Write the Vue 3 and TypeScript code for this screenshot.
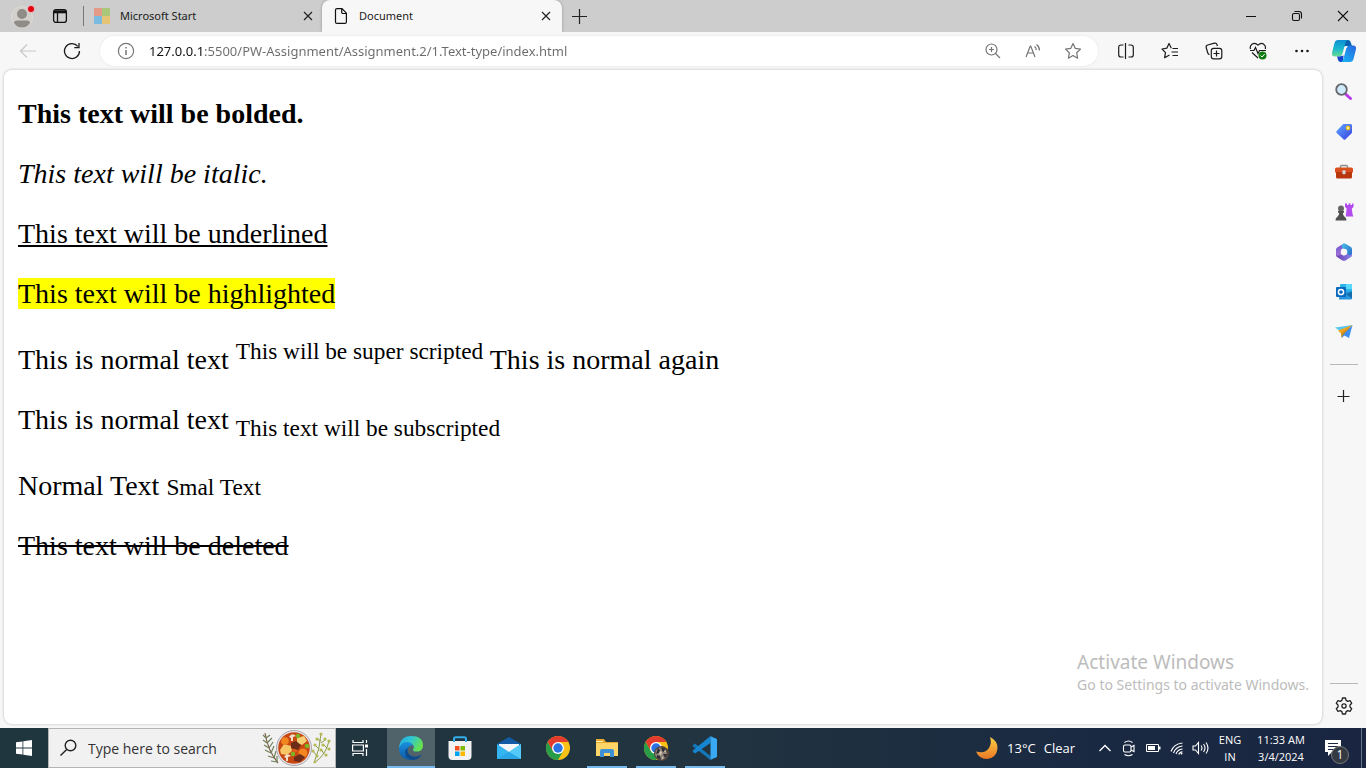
<script setup lang="ts">
import { ref } from 'vue'

interface SideApp {
  id: string
  label: string
}

interface TaskApp {
  id: string
  label: string
  state: 'active' | 'running' | 'idle'
}

const address = ref<string>('127.0.0.1:5500/PW-Assignment/Assignment.2/1.Text-type/index.html')
const query = ref<string>('')

const sideApps: SideApp[] = [
  { id: 'search', label: 'Search' },
  { id: 'shopping', label: 'Shopping' },
  { id: 'tools', label: 'Tools' },
  { id: 'games', label: 'Games' },
  { id: 'm365', label: 'Microsoft 365' },
  { id: 'outlook', label: 'Outlook' },
  { id: 'drop', label: 'Drop' },
]

const taskApps: TaskApp[] = [
  { id: 'edge', label: 'Microsoft Edge', state: 'active' },
  { id: 'store', label: 'Microsoft Store', state: 'idle' },
  { id: 'mail', label: 'Mail', state: 'idle' },
  { id: 'chrome', label: 'Google Chrome', state: 'idle' },
  { id: 'files', label: 'File Explorer', state: 'running' },
  { id: 'profile', label: 'Google Chrome profile', state: 'running' },
  { id: 'code', label: 'Visual Studio Code', state: 'running' },
]
</script>

<template>
  <div class="desktop">
    <header class="tabstrip">
      <button class="profile" aria-label="Profile">
        <svg width="24" height="26" viewBox="0 0 24 26">
          <circle cx="11" cy="14" r="10.5" fill="#d2d0cd" stroke="#dedbd5" />
          <circle cx="11" cy="11" r="5" fill="#8f8b86" />
          <path d="M3 20q0-2.500 3-2.500h10q3 0 3 2.500q-3 4.500-8 4.500t-8-4.500z" fill="#8f8b86" />
          <circle cx="20" cy="6" r="3.500" fill="#e3000f" stroke="#eee" stroke-width=".6" />
        </svg>
      </button>
      <button class="workspaces" aria-label="Tab actions">
        <svg width="16" height="16" viewBox="0 0 16 16" fill="none" stroke="#111" stroke-width="1.300">
          <rect x="1.600" y="1.600" width="12.800" height="12.800" rx="2.500" />
          <path d="M2 3.800h12" stroke-width="3" />
          <path d="M5.500 5v9" />
        </svg>
      </button>
      <div class="tab">
        <svg class="favicon" width="16" height="16" viewBox="0 0 16 16">
          <path fill="#e49a88" d="M0 0h8v8H0z" /><path fill="#abc779" d="M8 0h8v8H8z" />
          <path fill="#7bbbdf" d="M0 8h8v8H0z" /><path fill="#e5c475" d="M8 8h8v8H8z" />
        </svg>
        <span class="tab-title">Microsoft Start</span>
        <button class="tab-close" aria-label="Close Microsoft Start">
          <svg width="10" height="10" viewBox="0 0 10 10" stroke="#222" stroke-width="1.200"><path d="M1 1l8 8M9 1l-8 8" /></svg>
        </button>
      </div>
      <div class="tab current">
        <svg class="favicon" width="16" height="16" viewBox="0 0 16 16" fill="none" stroke="#111" stroke-width="1.200">
          <path d="M4 .6h5l4.400 4.600v8.700q0 1.500-1.500 1.500H4q-1.500 0-1.500-1.500V2.100Q2.500.6 4 .6zM8.700.8v3.400q0 1.300 1.300 1.300h3.300" />
        </svg>
        <span class="tab-title">Document</span>
        <button class="tab-close" aria-label="Close Document">
          <svg width="10" height="10" viewBox="0 0 10 10" stroke="#222" stroke-width="1.200"><path d="M1 1l8 8M9 1l-8 8" /></svg>
        </button>
      </div>
      <button class="new-tab" aria-label="New tab">
        <svg width="15" height="15" viewBox="0 0 15 15" stroke="#222" stroke-width="1.200"><path d="M7.500 0v15M0 7.500h15" /></svg>
      </button>
      <div class="window-controls">
        <button aria-label="Minimize"><svg width="12" height="12" viewBox="0 0 12 12" stroke="#111"><path d="M1 6.500h10" /></svg></button>
        <button aria-label="Restore">
          <svg width="12" height="12" viewBox="0 0 12 12" fill="none" stroke="#111" stroke-width="1.100">
            <rect x="1.500" y="3.500" width="7" height="7" rx="1.500" /><path d="M3.500 1.500h4.500q2.500 0 2.500 2.500v4.500" />
          </svg>
        </button>
        <button aria-label="Close window"><svg width="12" height="12" viewBox="0 0 12 12" stroke="#111" stroke-width="1.100"><path d="M1 1l10 10M11 1L1 11" /></svg></button>
      </div>
    </header>

    <nav class="toolbar" aria-label="Browser toolbar">
      <button class="tool" aria-label="Back" disabled>
        <svg width="18" height="16" viewBox="0 0 18 16" fill="none" stroke="#c8c8c8" stroke-width="1.200"><path d="M17 8H1.500M8 1.500L1.500 8 8 14.500" /></svg>
      </button>
      <button class="tool" aria-label="Refresh">
        <svg width="18" height="18" viewBox="0 0 18 18" fill="none" stroke="#1b1b1b" stroke-width="1.300"><path d="M16.500 9A7.500 7.500 0 1 1 14.800 4.300M16 1v4.700h-4.700" /></svg>
      </button>
      <div class="address">
        <button class="info" aria-label="Site information">
          <svg width="18" height="18" viewBox="0 0 18 18" fill="none" stroke="#767676" stroke-width="1.200"><circle cx="9" cy="9" r="7.600" /><path d="M9 8v5M9 5v1.500" stroke-width="1.500" /></svg>
        </button>
        <input v-model="address" class="url" type="text" aria-label="Address" spellcheck="false" />
        <button aria-label="Zoom">
          <svg width="16" height="16" viewBox="0 0 16 16" fill="none" stroke="#747474" stroke-width="1.200"><circle cx="6.500" cy="6.500" r="5.500" /><path d="M10.500 10.500l4.500 4.500M6.500 4v5M4 6.500h5" /></svg>
        </button>
        <button aria-label="Read aloud">
          <svg width="16" height="16" viewBox="0 0 16 16" fill="none" stroke="#747474" stroke-width="1.200"><path d="M1 14L5.300 3h.4L10 14M2.700 10h5.600M9.500 3.500q1.800 1.300 1.800 3.500M11.500 1.500q3 2.200 3 6" /></svg>
        </button>
        <button aria-label="Add to favorites">
          <svg width="18" height="18" viewBox="0 0 18 18" fill="none" stroke="#747474" stroke-width="1.200" stroke-linejoin="round"><path d="M9 1.500l2.300 4.900 5.200.7-3.800 3.700.9 5.400L9 13.600l-4.600 2.600.9-5.400L1.500 7.100l5.200-.7z" /></svg>
        </button>
      </div>
      <button class="tool" aria-label="Split screen">
        <svg width="18" height="18" viewBox="0 0 18 18" fill="none" stroke="#1b1b1b" stroke-width="1.200"><path d="M6.500 3H4Q1.700 3 1.700 5.300v7.400Q1.700 15 4 15h2.500M11.500 3H14q2.300 0 2.300 2.300v7.400Q16.300 15 14 15h-2.500M8.500 1v16" /></svg>
      </button>
      <button class="tool" aria-label="Favorites">
        <svg width="18" height="18" viewBox="0 0 18 18" fill="none" stroke="#1b1b1b" stroke-width="1.200" stroke-linejoin="round"><path d="M11.500 6.500H17M10.300 6.200L8 1.500 5.800 6.200 1 7l3.500 3.600-.9 5.100L8.500 13M10.500 10H17M11.500 13.500H17" /></svg>
      </button>
      <button class="tool" aria-label="Collections">
        <svg width="18" height="18" viewBox="0 0 18 18" fill="none" stroke="#1b1b1b" stroke-width="1.200"><path d="M4.500 12.500q-1.300 0-1.700-1.500L1.200 5.500Q.8 3.500 2.700 3l6.800-1.800q1.900-.4 2.500 1.300l.4 1.500" /><rect x="6.300" y="6.300" width="10.500" height="10.500" rx="2.300" fill="#f7f7f7" /><path d="M11.500 8.500v6M8.500 11.500h6" /></svg>
      </button>
      <button class="tool" aria-label="Browser essentials">
        <svg width="18" height="18" viewBox="0 0 18 18" fill="none" stroke="#1b1b1b" stroke-width="1.200"><path d="M1.500 7Q.5 4 3 2.200q3-2 6 1 3-3 5.700-1 2.500 1.800 1.500 4.800M1 8.500h4l1.500-3 2.500 6 1.500-3H17M3 10.500l6 5.500" /><circle cx="13.500" cy="13.500" r="4" fill="#107c10" stroke="none" /><path d="M11.500 13.500l1.500 1.500 2.700-3" stroke="#fff" stroke-width="1" /></svg>
      </button>
      <button class="tool" aria-label="Settings and more">
        <svg width="16" height="4" viewBox="0 0 16 4" fill="#1b1b1b"><circle cx="2.500" cy="2" r="1.300" /><circle cx="8" cy="2" r="1.300" /><circle cx="13.500" cy="2" r="1.300" /></svg>
      </button>
      <button class="copilot" aria-label="Copilot">
        <svg width="26" height="24" viewBox="0 0 26 24">
          <defs>
            <linearGradient id="cpA" x1="0" y1="0" x2="0" y2="1"><stop offset="0" stop-color="#0f8fd4" /><stop offset=".5" stop-color="#18b5cf" /><stop offset="1" stop-color="#67dd92" /></linearGradient>
            <linearGradient id="cpB" x1="0" y1="1" x2="1" y2="0"><stop offset="0" stop-color="#18b9f5" /><stop offset="1" stop-color="#2765df" /></linearGradient>
          </defs>
          <path d="M13 1h4q2 0 2.600 2l1.400 4h-6q-2 0-2.700 2z" fill="#0761ae" />
          <path d="M7 1h9.500q-1.500.5-2 2.500l-3 11q-.8 3-3.500 3H4Q0 17.500 1.200 13L3.500 4Q4.300 1 7 1z" fill="url(#cpA)" />
          <path d="M6 17.500h2.500q2.500 0 3.500-3l1-3.500-1 12H9.500q-1.800 0-2.400-2z" fill="#1746ce" />
          <path d="M18.500 6.500H22q4 0 2.800 4.500l-2.300 9q-.8 3-3.700 3H10q1.700-.7 2.300-2.800l3-11q.8-2.700 3.200-2.700z" fill="url(#cpB)" />
          <path d="M14 7.500h2.500q-1.500 1-2 3l-1.800 6.200H10q1.200-.8 1.700-2.400z" fill="#f7f7f7" />
        </svg>
      </button>
    </nav>

    <div class="workspace">
      <main class="page">
        <p><b>This text will be bolded.</b></p>
        <p><i>This text will be italic.</i></p>
        <p><u>This text will be underlined</u></p>
        <p><mark>This text will be highlighted</mark></p>
        <p>This is normal text <sup>This will be super scripted</sup> This is normal again</p>
        <p>This is normal text <sub>This text will be subscripted</sub></p>
        <p>Normal Text <small>Smal Text</small></p>
        <p><del>This text will be deleted</del></p>
        <aside class="watermark">
          <div class="watermark-title">Activate Windows</div>
          <div>Go to Settings to activate Windows.</div>
        </aside>
      </main>

      <nav class="sidebar" aria-label="Sidebar">
        <button v-for="app in sideApps" :key="app.id" :aria-label="app.label">
          <svg width="20" height="20" viewBox="0 0 20 20">
            <template v-if="app.id === 'search'">
              <path d="M11.500 12l5 4.500" stroke="#b83bea" stroke-width="3" stroke-linecap="round" />
              <circle cx="7.500" cy="7.500" r="5.300" fill="#cfeafc" stroke="#65686b" stroke-width="1.800" />
            </template>
            <template v-else-if="app.id === 'shopping'">
              <defs><linearGradient id="tagFill" x1="0" y1="0" x2="1" y2="1"><stop offset="0" stop-color="#5ca9ff" /><stop offset="1" stop-color="#3a3fe0" /></linearGradient></defs>
              <path d="M10 2h6.500Q18 2 18 3.500V10q0 1-.8 1.700l-5.700 5.600q-1 1-2 0L2.700 11q-1-1 0-2l5.800-6.300Q9 2 10 2z" fill="url(#tagFill)" />
              <circle cx="14" cy="6" r="1.800" fill="#fff3a0" stroke="#e9b91c" stroke-width="1.200" />
            </template>
            <template v-else-if="app.id === 'tools'">
              <path d="M6.500 6V4.500q0-1 1-1h5q1 0 1 1V6" fill="none" stroke="#8d8d8d" stroke-width="1.400" />
              <path d="M2.500 5.500h15q1.500 0 1.500 1.500v3.500H1V7q0-1.500 1.500-1.500z" fill="#d9501f" />
              <path d="M2 10h16v5q0 1.500-1.500 1.500h-13Q2 16.500 2 15z" fill="#b8370d" />
              <rect x="8.400" y="8.300" width="3.200" height="4" rx="1.200" fill="#d4d8dc" />
            </template>
            <template v-else-if="app.id === 'games'">
              <path d="M11 1.500h2V3h1.500V1.500h2V3H18V1.500h1.500V5l-1.700 1.500.7 5.500.8 2.500h-7.600l1-8L11 5z" fill="#b34bf1" />
              <circle cx="7" cy="6.500" r="3" fill="#666" />
              <path d="M4 9h6v1.800H8.800q0 3 2 4.200 1.700.5 1.700 3.500h-11q0-3 1.700-3.500 2-1.200 2-4.200H4z" fill="#505050" />
            </template>
            <template v-else-if="app.id === 'm365'">
              <defs>
                <linearGradient id="mL" x1="0" y1="0" x2="0" y2="1"><stop offset="0" stop-color="#6a58d0" /><stop offset="1" stop-color="#a873d8" /></linearGradient>
                <linearGradient id="mR" x1="0" y1="0" x2="1" y2="1"><stop offset="0" stop-color="#49c0e8" /><stop offset="1" stop-color="#2467c8" /></linearGradient>
                <linearGradient id="mB" x1="0" y1="0" x2="1" y2="0"><stop offset="0" stop-color="#6d3bb0" /><stop offset="1" stop-color="#8a86ea" /></linearGradient>
              </defs>
              <path d="M10 1.500L3.500 5.300q-1.500.8-1.500 2.200v5.300q0 2 2 2.200 3 0 3-3V8.700q0-1 1-1.700l5-3.500z" fill="url(#mL)" />
              <path d="M8 2.500q2-1.800 4-.4l4.500 2.700q1.500.8 1.500 2.400v5.600q0 2-1.500 1.800-3.500-.5-3.500-3.600V8.500L8 6z" fill="url(#mR)" />
              <path d="M18 11.500v1.700q0 1.200-1 1.800l-5 3.200q-2 1-4 0L3.500 15.300Q2 14.300 2 12.700q2.500 2.200 5-.7l3 1.800 3-2q3 3 5-.3z" fill="url(#mB)" />
              <circle cx="10" cy="10" r="3.300" fill="#f7f7f7" />
            </template>
            <template v-else-if="app.id === 'outlook'">
              <rect x="6" y="2" width="12" height="9" rx="1" fill="#2bb4e8" /><path d="M12 2h5q1 0 1 1v4h-6z" fill="#58d9fb" />
              <path d="M5 9.500h13v7q0 1-1 1H5z" fill="#2896df" /><path d="M18 9.500v7L12 12z" fill="#126dac" />
              <rect x="2" y="5" width="10" height="10" rx="1" fill="#0969bd" />
              <circle cx="7" cy="10" r="2.600" fill="none" stroke="#fff" stroke-width="1.500" />
            </template>
            <template v-else>
              <path d="M1 5.500L18.500 3 7.500 10z" fill="#54c8f2" />
              <path d="M4 8.500L18.500 3 7.500 12z" fill="#f1a51d" />
              <path d="M7 11.500L18.500 3 10 13.500 7.500 16z" fill="#c98a1d" />
              <path d="M18.500 3L15 16l-4.500-2.500L7.500 16 9 13z" fill="#3b8df2" />
            </template>
          </svg>
        </button>
        <hr class="after-apps" />
        <button aria-label="Customize">
          <svg width="14" height="14" viewBox="0 0 14 14" stroke="#222" stroke-width="1.200"><path d="M6.500 1v12M.5 7.500h12" /></svg>
        </button>
        <hr class="before-settings" />
        <button aria-label="Settings">
          <svg width="18" height="18" viewBox="0 0 18 18" fill="none" stroke="#222" stroke-width="1.300" stroke-linejoin="round">
            <path d="M7.500 1h3l.6 2.400 1.700 1 2.400-.7 1.500 2.600L15 8v2l1.700 1.700-1.500 2.600-2.400-.7-1.700 1-.6 2.400h-3l-.6-2.400-1.700-1-2.400.7-1.500-2.600L3 10V8L1.300 6.300l1.500-2.600 2.400.7 1.700-1z" /><circle cx="9" cy="9" r="2.100" />
          </svg>
        </button>
      </nav>
    </div>

    <footer class="taskbar">
      <button class="start" aria-label="Start">
        <svg width="16" height="16" viewBox="0 0 16 16" fill="#fff"><path d="M0 2.300L6.500 1.400v6.200H0zM7.300 1.300L16 0v7.600H7.300zM0 8.400h6.500v6.200L0 13.700zM7.300 8.400H16V16l-8.700-1.300z" /></svg>
      </button>
      <label class="search">
        <svg width="18" height="18" viewBox="0 0 18 18" fill="none" stroke="#222" stroke-width="1.400"><circle cx="10.500" cy="6.500" r="5.300" /><path d="M6.700 10.500L.5 16.500" /></svg>
        <input v-model="query" type="text" placeholder="Type here to search" aria-label="Type here to search" />
        <svg width="70" height="38" viewBox="0 0 70 38">
          <g fill="none" stroke="#71805a" stroke-width="1.200">
            <path d="M3 4q3 18 13 30" stroke="#80614d" />
            <path d="M4 9L1 6M4 9l4-3M5 14l-4-3M5 14l5-5M7 19l-5-3M7 19l4-6M9 24l-6-3M9 24l3-7M12 29l-6-2M12 29l2-7M15 33l-6-1M15 33v-6" />
          </g>
          <g fill="none" stroke="#8e9a49" stroke-width="1"><path d="M52 34q6-14 7-29M52 34q12-8 15-22M55 27l-4-5M57 20l-4-4M59 12l-4-2M59 14l4-3M62 25l-3-5M65 19l-3-3" /></g>
          <g fill="#b4b954"><circle cx="59" cy="5" r="1.600" /><circle cx="55" cy="10" r="1.600" /><circle cx="63" cy="10" r="1.600" /><circle cx="53" cy="16" r="1.600" /><circle cx="61" cy="16" r="1.600" /><circle cx="67" cy="12" r="1.600" /><circle cx="51" cy="22" r="1.600" /><circle cx="59" cy="21" r="1.600" /><circle cx="67" cy="20" r="1.600" /><circle cx="55" cy="27" r="1.600" /><circle cx="64" cy="26" r="1.600" /><circle cx="53" cy="33" r="1.300" /></g>
          <circle cx="32" cy="19" r="17.500" fill="#e6e4e7" stroke="#aaa5ae" /><circle cx="32" cy="19" r="15.800" fill="#c84813" />
          <path d="M18 21l4-6 7 2 1 5-5 4-6-1z" fill="#f6c667" /><path d="M35 9l7-2 3 5-5 4-5-2z" fill="#f7cf78" />
          <circle cx="23" cy="12" r="3.800" fill="#f38521" /><circle cx="41" cy="24" r="4.500" fill="#f38521" /><circle cx="33" cy="21" r="2.500" fill="#e25f19" />
          <path d="M29 14l5-2 5 4-3 5-7-2zM32 28l6-3 5 3-5 5-6-1z" fill="#6c2c18" />
          <path d="M27 8q3-5 7-1l-3 1v4h-2V9zM22 28q3-5 7-1l-3 1v4h-2v-3z" fill="#f1dfc9" />
          <circle cx="36" cy="7" r="2.200" fill="#7bb526" /><circle cx="45" cy="17" r="2.300" fill="#7bb526" /><circle cx="31" cy="25" r="2.200" fill="#7bb526" />
        </svg>
      </label>
      <button class="task-view" aria-label="Task View">
        <svg width="18" height="18" viewBox="0 0 18 18" fill="none" stroke="#fff" stroke-width="1.200"><path d="M2 1v2.500h10V1M2 17v-2.500h10V17M1.600 6h10.800v6H1.600zM15.500 1v3M15.500 10v7" /><path d="M14 5.500h3v3h-3z" fill="#fff" stroke="none" /></svg>
      </button>
      <div class="apps">
        <button v-for="app in taskApps" :key="app.id" :class="app.state" :aria-label="app.label">
          <svg width="26" height="26" viewBox="0 0 26 26">
            <template v-if="app.id === 'edge'">
              <defs>
                <linearGradient id="edTop" x1="0" y1="0" x2="1" y2=".4"><stop offset="0" stop-color="#22a7dd" /><stop offset=".5" stop-color="#2fc6d4" /><stop offset="1" stop-color="#65e151" /></linearGradient>
                <linearGradient id="edLow" x1="0" y1="0" x2="0" y2="1"><stop offset="0" stop-color="#1a91df" /><stop offset="1" stop-color="#0c59a5" /></linearGradient>
              </defs>
              <path d="M1 13Q2 1 13 1q12 0 12 9.500 0 6-6.500 6-4 0-3.500-2 2-2.500-.5-5Q9 5 1 13z" fill="url(#edTop)" />
              <path d="M1 13Q4 6 10 7q4 .6 5 3.500-4-.5-5.300 3-1.200 7.500 6.300 8.500 3.500.4 7-2-3.500 5-10 5Q1 24.500 1 13z" fill="url(#edLow)" />
              <path d="M9.800 12.500q-1.800 6 3.700 8.500 5 2 9.500-1 .8-.3.600.3-3 4.200-8 4.700-8-.7-8.500-7.500.2-3.500 2.700-5z" fill="#114a8b" />
            </template>
            <template v-else-if="app.id === 'store'">
              <path d="M1.500 6h23v15q0 4-4 4h-15q-4 0-4-4z" fill="#f2f2f2" />
              <path d="M7 7V4q0-1.800 1.800-1.800h8.400Q19 2.200 19 4v3" fill="none" stroke="#32aeea" stroke-width="2" />
              <path d="M8 11h4.500v4.500H8z" fill="#f25022" /><path d="M13.500 11H18v4.500h-4.500z" fill="#7fba00" /><path d="M8 16.500h4.500V21H8z" fill="#00a4ef" /><path d="M13.500 16.500H18V21h-4.500z" fill="#ffb900" />
            </template>
            <template v-else-if="app.id === 'mail'">
              <path d="M1 9l12-7 12 7v4H1z" fill="#135ca5" /><path d="M3 9h20v3l-10 6-10-6z" fill="#f5f7f9" /><path d="M1 9l12 8 12-8v15H1z" fill="#35b4f2" /><path d="M13 17l12-8v15z" fill="#55caf8" /><path d="M1 24l12-7 12 7z" fill="#2ba6e6" />
            </template>
            <template v-else-if="app.id === 'chrome' || app.id === 'profile'">
              <circle cx="13" cy="13" r="12" fill="#fbc116" />
              <path d="M2.600 7A12 12 0 0 1 23.400 7H13l-5.200 9z" fill="#e33b2e" />
              <path d="M2.600 7A12 12 0 0 0 13 25l5.200-9-10.400 0z" fill="#289c49" />
              <circle cx="13" cy="13" r="6" fill="#fff" /><circle cx="13" cy="13" r="4.700" fill="#2b72e3" />
              <g v-if="app.id === 'profile'">
                <circle cx="18.500" cy="18.500" r="7.500" fill="#51443d" /><path d="M13 15l4-3 2 3 3-1 2 4-2 5-3 2-4-1-3-4z" fill="#91867c" />
                <path d="M15 13l2 2-1 3-3 1zM19 13l3 1-1 3-2-1zM20 19l4 0-2 4zM14 20l3 1 1 4-4-2z" fill="#2d2d35" /><path d="M17 16l2 1-1 3-2-1zM22 15l1 2h-2zM19 22l2 1-2 1z" fill="#d5c8ba" />
              </g>
            </template>
            <template v-else-if="app.id === 'files'">
              <path d="M2 4h8l2 3h12v5H2z" fill="#e7a92b" /><path d="M2 8h22v13H2z" fill="#fed567" /><path d="M2 6h7v1H2z" fill="#fff1b8" />
              <path d="M6 22v-6q0-2 2-2h10q2 0 2 2v6h-4v-4h-6v4z" fill="#3e91d5" />
            </template>
            <template v-else>
              <path d="M1 10l2-1.500L18.500 21v4L.8 11.300z" fill="#1476bb" />
              <path d="M18.500 1v7L3 18.500.8 16.800v-1.300z" fill="#1686d1" />
              <path d="M18 1l7 3v18l-7 3q.5-.5.5-1.300V2.300Q18.500 1.500 18 1z" fill="#38a9f2" />
            </template>
          </svg>
        </button>
      </div>
      <button class="weather">
        <svg width="24" height="24" viewBox="0 0 24 24">
          <defs><linearGradient id="moonFill" x1="0" y1="0" x2="0" y2="1"><stop offset="0" stop-color="#f8cf45" /><stop offset="1" stop-color="#ec7825" /></linearGradient></defs>
          <path d="M15 1q8 4 7.500 11.500Q21.500 22 12 23 4 23 1 15.500q9 2.500 13-3.500 3-5 1-11z" fill="url(#moonFill)" />
        </svg>
        <span>13°C</span><span>Clear</span>
      </button>
      <div class="tray">
        <button aria-label="Show hidden icons"><svg width="14" height="14" viewBox="0 0 14 14" fill="none" stroke="#fff" stroke-width="1.300"><path d="M1.500 10L7 4.500l5.500 5.500" /></svg></button>
        <button aria-label="Meet Now"><svg width="14" height="18" viewBox="0 0 14 18" fill="none" stroke="#fff" stroke-width="1.100"><rect x="1.500" y="6" width="7.500" height="7" rx="1.500" /><path d="M9 8l3-1.500v6L9 11M2.500 3.500q4-3 8 0M2.500 15.500q4 2.500 8 0" /></svg></button>
        <button aria-label="Battery"><svg width="16" height="10" viewBox="0 0 16 10"><path d="M1.500 1.500h12v7h-12z" fill="none" stroke="#fff" /><path d="M3 3h7v4H3zM14 3.500h1.500v3H14z" fill="#fff" /></svg></button>
        <button aria-label="Network"><svg width="14" height="14" viewBox="0 0 14 14" fill="none" stroke="#fff" stroke-width="1.100"><path d="M1 10.500Q3.500 3 12.500 2M3.500 12Q5.500 6 12.500 5M6 13q1.500-4.500 6.500-5M8.800 13.500q.7-2.500 3.700-2.700" /><circle cx="11.500" cy="12.500" r="1" fill="#fff" stroke="none" /></svg></button>
        <button aria-label="Volume"><svg width="18" height="14" viewBox="0 0 18 14" fill="none" stroke="#fff" stroke-width="1.100"><path d="M1 5h2.500l3-3.500v11L3.500 9H1zM9 4.500q2 2.500 0 5M11.500 3q3 4 0 8M14 1.500q4 5.500 0 11" /></svg></button>
      </div>
      <button class="language"><span>ENG</span><span>IN</span></button>
      <button class="clock"><span>11:33 AM</span><span>3/4/2024</span></button>
      <button class="notifications" aria-label="Notifications, 1 new">
        <svg width="18" height="18" viewBox="0 0 18 18"><path d="M1 1h16v12H8l-4 4v-4H1z" fill="#fff" /><path d="M4 4.500h10M4 7.500h10M4 10.500h6" stroke="#1b2943" /></svg>
        <span class="count">1</span>
      </button>
      <button class="show-desktop" aria-label="Show desktop"></button>
    </footer>
  </div>
</template>

<style>
body {
  margin: 0;
}
</style>

<style scoped>
.desktop {
  display: flex;
  flex-direction: column;
  height: 100vh;
  background: #f7f7f7;
  font-family: "Open Sans", "Noto Sans", sans-serif;
  font-size: 12px;
  color: #1b1b1b;
  overflow: hidden;
}
button {
  display: flex;
  align-items: center;
  justify-content: center;
  flex: none;
  padding: 0;
  border: 0;
  background: none;
  font: inherit;
  color: inherit;
}
input {
  min-width: 0;
  padding: 0;
  border: 0;
  outline: 0;
  background: none;
  font: inherit;
}
svg {
  display: block;
  flex: none;
}

.tabstrip {
  display: flex;
  flex: none;
  height: 32px;
  background: #cdcdcd;
}
.profile {
  width: 46px;
}
.workspaces {
  width: 28px;
}
.tab {
  display: flex;
  align-items: center;
  width: 240px;
  box-sizing: border-box;
  padding: 0 8px 0 11px;
}
.tab:not(.current) {
  width: 239px;
  margin-left: 9px;
  padding-left: 11px;
  padding-right: 6px;
  background: linear-gradient(#777, #777) left center / 1px 20px no-repeat;
}
.tab.current {
  border-radius: 8px 8px 0 0;
  background: #f7f7f7;
  box-shadow: 0 0 3px rgba(0, 0, 0, 0.3);
  clip-path: inset(0 -4px 0 -4px);
}
.tab-title {
  flex: 1;
  padding: 0 0 2px 10px;
  font-family: "Noto Sans", "Open Sans", sans-serif;
  font-size: 11px;
}
.tab-close {
  width: 16px;
  height: 16px;
}
.new-tab {
  width: 35px;
}
.window-controls {
  display: flex;
  margin-left: auto;
}
.window-controls button {
  width: 46px;
}

.toolbar {
  display: flex;
  align-items: center;
  flex: none;
  height: 38px;
  padding-left: 6px;
}
.tool {
  width: 44px;
  height: 32px;
}
.address {
  display: flex;
  align-items: center;
  flex: 1;
  height: 30px;
  margin: 0 6px;
  padding: 0 5px 0 8px;
  border-radius: 15px;
  background: #fff;
  box-shadow: 0 0 3px rgba(0, 0, 0, 0.08);
}
.address button {
  width: 40px;
  height: 28px;
}
.address .info {
  width: 36px;
}
.url {
  flex: 1;
  margin-left: 5px;
  font-family: "Noto Sans", "Open Sans", sans-serif;
  font-size: 13px;
  color: transparent;
  background: linear-gradient(90deg, #111 54px, #6b6b6b 54px);
  background-clip: text;
}
.copilot {
  width: 40px;
  margin-right: 2px;
}

.workspace {
  display: flex;
  flex: 1;
  min-height: 0;
}
.page {
  position: relative;
  flex: 1;
  margin: 0 0 4px 4px;
  padding: 0 14px;
  border-radius: 8px;
  background: #fff;
  box-shadow: 0 0 3px rgba(0, 0, 0, 0.25);
  font-family: "Liberation Serif", "Times New Roman", serif;
  font-size: 28px;
  color: #000;
}
.page p {
  margin: 28px 0;
}
.page mark {
  background: #ff0;
}
.page small,
.page sub,
.page sup {
  font-size: smaller;
}
.watermark {
  position: absolute;
  right: 13px;
  bottom: 29px;
  font-family: "Noto Sans", "Open Sans", sans-serif;
  font-size: 14px;
  line-height: 20px;
  color: #bcbcbc;
}
.watermark-title {
  font-size: 19px;
  line-height: 26px;
}
.sidebar {
  display: flex;
  flex-direction: column;
  align-items: center;
  width: 44px;
  padding: 2px 0;
}
.sidebar button {
  width: 40px;
  height: 40px;
}
.sidebar hr {
  width: 28px;
  height: 1px;
  border: 0;
  background: #b8b8b8;
}
.sidebar .after-apps {
  margin: 12px 0 11px;
}
.sidebar .before-settings {
  margin: auto 0 2px;
}

.taskbar {
  display: flex;
  flex: none;
  height: 40px;
  background: linear-gradient(90deg, #20363f, #21343f 50%, #1a2942 80%, #1a2641);
  color: #fff;
}
.start,
.task-view {
  width: 48px;
}
.search {
  display: flex;
  align-items: center;
  width: 288px;
  box-sizing: border-box;
  padding: 0 3px 0 11px;
  border: 1px solid #b4b4b4;
  background: #f1f1f1;
}
.search input {
  flex: 1;
  padding-left: 10px;
  font-size: 14px;
}
.search input::placeholder {
  color: #333;
  opacity: 1;
}
.apps {
  display: flex;
  gap: 1px;
  margin-left: 3px;
}
.apps button {
  width: 48px;
}
.apps .active {
  background: linear-gradient(#76b9ed, #76b9ed) center bottom / 100% 2px no-repeat #50636b;
}
.apps .running {
  background: linear-gradient(#76b9ed, #76b9ed) center bottom / 40px 2px no-repeat;
}
.weather {
  gap: 8px;
  margin-left: auto;
  padding-right: 18px;
  font-size: 13px;
}
.tray {
  display: flex;
}
.tray button {
  width: 24px;
}
.language,
.clock {
  flex-direction: column;
  width: 34px;
  padding-bottom: 1px;
  font-size: 11px;
  line-height: 17px;
}
.clock {
  width: 68px;
}
.notifications {
  position: relative;
  width: 36px;
}
.count {
  position: absolute;
  right: 2px;
  bottom: 4px;
  width: 16px;
  border: 1px solid #777;
  border-radius: 50%;
  background: #343a42;
  font-size: 12px;
  line-height: 16px;
}
.show-desktop {
  width: 5px;
  margin-left: 10px;
  border-left: 1px solid #66718a;
}
</style>
